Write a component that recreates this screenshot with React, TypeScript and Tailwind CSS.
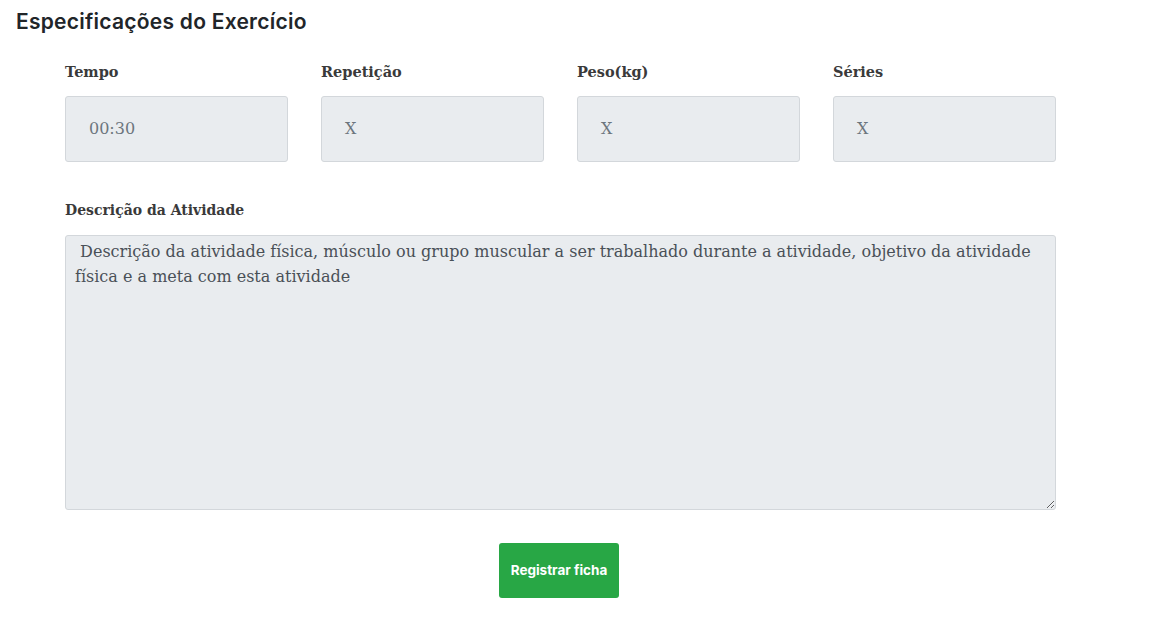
export default function App() {
  const fields = [
    { label: "Tempo", value: "00:30" },
    { label: "Repetição", value: "X" },
    { label: "Peso(kg)", value: "X" },
    { label: "Séries", value: "X" },
  ];

  return (
    <section className="min-h-screen bg-white pt-[10px]">
      {/* Title */}
      <h2 className="pl-[16px] text-[21px] font-semibold leading-[24px] tracking-[0.25px] text-[#212529] font-['Inter',sans-serif]">
        Especificações do Exercício
      </h2>

      <div className="w-[991px] ml-[65px] mt-[28px] font-['DejaVu_Serif',serif]">
        {/* Small inputs */}
        <div className="grid grid-cols-4 gap-[33px]">
          {fields.map((f) => (
            <div key={f.label}>
              <label className="block text-[14.5px] font-bold leading-[20px] text-[#3a3a3a]">
                {f.label}
              </label>
              <div className="mt-[14px] h-[66px] flex items-center pl-[23px] bg-[#e9ecef] border border-[#d3d7db] rounded-[3px] text-[16px] text-[#6c757d]">
                {f.value}
              </div>
            </div>
          ))}
        </div>

        {/* Description */}
        <label className="block mt-[38px] text-[14px] font-bold leading-[20px] text-[#3a3a3a]">
          Descrição da Atividade
        </label>
        <textarea
          readOnly
          className="block mt-[15px] w-full h-[275px] px-[9px] py-[3px] bg-[#e9ecef] border border-[#d3d7db] rounded-[3px] text-[16px] leading-[25px] text-[#495057] resize-y"
          value=" Descrição da atividade física, músculo ou grupo muscular a ser trabalhado durante a atividade, objetivo da atividade física e a meta com esta atividade"
        />

        {/* Submit */}
        <div className="flex justify-center mt-[33px] pr-[3px]">
          <button className="w-[120px] h-[55px] bg-[#28a745] rounded-[3px] text-white text-[13.5px] font-bold font-['Inter',sans-serif]">
            Registrar ficha
          </button>
        </div>
      </div>
    </section>
  );
}
